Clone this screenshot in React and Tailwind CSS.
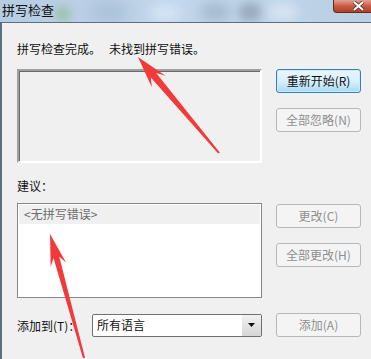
const font = { fontFamily: '"Noto Sans CJK SC", "Liberation Sans", sans-serif' };

// red annotation arrow from tail to tip
function arrowPoints(tail, tip, headLen = 30, headHalf = 8, shaftTail = 1, shaftHead = 3.5) {
  const dx = tip[0] - tail[0];
  const dy = tip[1] - tail[1];
  const len = Math.hypot(dx, dy);
  const ux = dx / len;
  const uy = dy / len;
  const px = -uy;
  const py = ux;
  const bx = tip[0] - ux * headLen;
  const by = tip[1] - uy * headLen;
  const nx = tip[0] - ux * (headLen - 8);
  const ny = tip[1] - uy * (headLen - 8);
  const pts = [
    [tail[0] + px * shaftTail, tail[1] + py * shaftTail],
    [nx + px * shaftHead, ny + py * shaftHead],
    [bx + px * headHalf, by + py * headHalf],
    tip,
    [bx - px * headHalf, by - py * headHalf],
    [nx - px * shaftHead, ny - py * shaftHead],
    [tail[0] - px * shaftTail, tail[1] - py * shaftTail],
  ];
  return pts.map((p) => p.map((v) => v.toFixed(1)).join(",")).join(" ");
}

function WinButton({ children, primary, disabled }) {
  let cls =
    "h-[24px] w-[85px] rounded-[3px] border text-[12px] flex items-center justify-center ";
  if (primary) {
    cls +=
      "border-[#3c7fb1] text-[#111] bg-gradient-to-b from-[#eaf6fd] via-[#d9f0fc] to-[#a7d9f5] shadow-[inset_0_0_0_1px_#cdeafa]";
  } else if (disabled) {
    cls += "border-[#b5b8bb] text-[#8f8f8f] bg-[#f4f4f4]";
  } else {
    cls += "border-[#707070] text-[#111] bg-gradient-to-b from-[#f2f2f2] to-[#cfcfcf]";
  }
  return (
    <div className={cls} style={font}>
      {children}
    </div>
  );
}

export default function App() {
  return (
    <div className="relative w-[371px] h-[359px] overflow-hidden bg-[#f0f0f0]" style={font}>
      {/* Title bar */}
      <div className="relative h-[22px] overflow-hidden bg-gradient-to-r from-[#b6cce3] via-[#c2d6eb] to-[#b9cfe4]">
        <div className="absolute left-[55px] top-[6px] h-[16px] w-[16px] rounded-full bg-[#7fb36d] opacity-50 blur-[5px]" />
        <div className="absolute left-[90px] top-[2px] h-[20px] w-[40px] rounded-full bg-[#8ea6c0] opacity-40 blur-[8px]" />
        <div className="absolute left-[150px] top-[4px] h-[18px] w-[30px] rounded-full bg-[#dcebfa] opacity-70 blur-[6px]" />
        <div className="absolute left-[200px] top-[3px] h-[18px] w-[30px] rounded-full bg-[#7f93aa] opacity-40 blur-[6px]" />
        <div className="absolute left-[238px] top-[3px] h-[18px] w-[24px] rounded-full bg-[#5f6f80] opacity-40 blur-[5px]" />
        <div className="absolute left-[268px] top-[3px] h-[18px] w-[30px] rounded-full bg-[#e8f1fb] opacity-60 blur-[6px]" />
        <div className="relative pl-[2px] pt-[1px] text-[13px] leading-[18px] text-[#111]">拼写检查</div>
        {/* close button */}
        <div className="absolute left-[333px] top-0 h-[13px] w-[44px] rounded-bl-[4px] border border-t-0 border-[#5a2b25] bg-gradient-to-b from-[#e0a193] via-[#c85b45] to-[#b53c22] flex items-center pl-[18px]">
          <svg width="13" height="10" viewBox="0 0 13 10">
            <path d="M2 1 L11 9 M11 1 L2 9" stroke="#40302c" strokeWidth="3.6" />
            <path d="M2 1 L11 9 M11 1 L2 9" stroke="#fff" strokeWidth="2.2" />
          </svg>
        </div>
      </div>

      {/* Client area */}
      <div className="h-[337px] border-t border-l-2 border-[#5d6e82] bg-[#f0f0f0] pl-[15px] text-[12px] text-[#111]">
        <div className="pt-[18px] h-[46px] leading-[16px]">
          拼写检查完成。&nbsp;&nbsp;&nbsp;未找到拼写错误。
        </div>

        <div className="flex gap-[14px]">
          <div className="h-[94px] w-[245px] border-2 border-t-[#a0a0a0] border-l-[#a0a0a0] border-r-white border-b-white bg-[#f0f0f0] shadow-[inset_1px_1px_0_#696969]" />
          <div className="flex flex-col gap-[15px]">
            <WinButton primary>重新开始(R)</WinButton>
            <WinButton disabled>全部忽略(N)</WinButton>
          </div>
        </div>

        <div className="mt-[10px] h-[30px] leading-[26px]">建议：</div>

        <div className="flex gap-[14px]">
          <div className="h-[95px] w-[245px] border border-[#828790] bg-white p-[1px]">
            <div className="h-[19px] bg-[#f0f0f0] pl-[5px] leading-[18px] text-[#6d6d6d]">&lt;无拼写错误&gt;</div>
          </div>
          <div className="flex flex-col gap-[15px] pt-[1px]">
            <WinButton disabled>更改(C)</WinButton>
            <WinButton disabled>全部更改(H)</WinButton>
          </div>
        </div>

        <div className="mt-[15px] flex items-center">
          <div className="w-[75px] leading-[23px]">添加到(T)：</div>
          <div className="flex h-[23px] w-[170px] rounded-[2px] border border-[#707070] bg-white overflow-hidden">
            <div className="flex-1 pl-[4px] leading-[20px]">所有语言</div>
            <div className="w-[19px] flex items-center justify-center bg-gradient-to-b from-[#f2f2f2] to-[#d6d6d6]">
              <svg width="7" height="4" viewBox="0 0 7 4">
                <path d="M0 0 H7 L3.5 4 Z" fill="#111" />
              </svg>
            </div>
          </div>
          <div className="ml-[14px]">
            <WinButton disabled>添加(A)</WinButton>
          </div>
        </div>
      </div>

      {/* annotation arrows */}
      <svg className="absolute left-0 top-0 pointer-events-none" width="371" height="359">
        <polygon points={arrowPoints([219, 153], [138, 57], 32, 9)} fill="#f23a3a" />
        <polygon points={arrowPoints([84, 358], [50, 234], 32, 8, 1, 3)} fill="#f23a3a" />
      </svg>
    </div>
  );
}
